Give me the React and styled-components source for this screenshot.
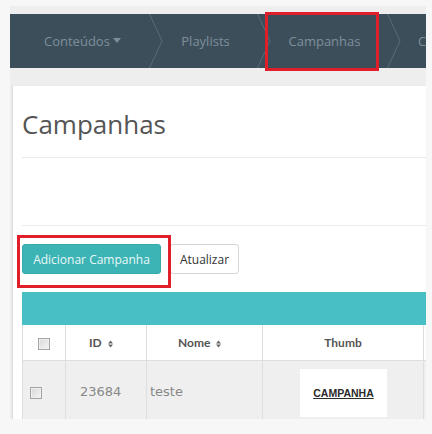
import React from "react";
import styled, { createGlobalStyle } from "styled-components";

const Global = createGlobalStyle`
  html, body { margin: 0; padding: 0; background: #f7f7f7; }
  body { font-family: "Open Sans", "Noto Sans", sans-serif; }
`;

const Wrapper = styled.div`
  margin: 6px 0 0 10px;
  width: 416px;
  height: 413px;
  background: #eeeeee;
  padding-top: 8px;
  box-sizing: border-box;
  overflow: hidden;
`;

const Nav = styled.nav`
  display: flex;
  height: 54px;
  background: #3d4e5b;
  width: 440px;
`;

const NavItem = styled.div`
  position: relative;
  display: flex;
  align-items: center;
  justify-content: ${(p) => p.$justify || "center"};
  flex: 0 0 ${(p) => p.$w}px;
  box-sizing: border-box;
  padding: ${(p) => p.$pad || "0"};
  color: #7d8e9b;
  font-size: 13px;
  white-space: nowrap;
`;

const Caret = styled.span`
  display: inline-block;
  width: 0;
  height: 0;
  margin-left: 3px;
  border-left: 4px solid transparent;
  border-right: 4px solid transparent;
  border-top: 5px solid #7d8e9b;
  vertical-align: middle;
  position: relative;
  top: -1px;
`;

const Highlight = styled.div`
  position: absolute;
  left: -6px;
  top: -2px;
  width: 114px;
  height: 59px;
  border: 3px solid #e01f2a;
  box-sizing: border-box;
  pointer-events: none;
`;

const Chevron = () => (
  <svg width="14" height="54" viewBox="0 0 14 54" style={{ flex: "0 0 14px" }}>
    <polyline points="0.5,0 13,27 0.5,54" fill="none" stroke="#5a6b77" strokeWidth="1" />
  </svg>
);

const Card = styled.section`
  margin: 18px 0 0 3px;
  background: #fff;
  box-shadow: -1px 0 1px #dcdcdc;
  padding: 0 0 0 9px;
  min-height: 340px;
`;

const Title = styled.h1`
  margin: 0;
  padding: 20px 0 0 0;
  font-size: 26px;
  line-height: 36px;
  font-weight: 400;
  color: #555;
  height: 51px;
  box-sizing: content-box;
  border-bottom: 1px solid #ebebeb;
`;

const Spacer = styled.div`
  height: 67px;
  border-bottom: 1px solid #ebebeb;
`;

const Toolbar = styled.div`
  display: flex;
  gap: 9px;
  padding-top: 18px;
  position: relative;
`;

const Button = styled.button`
  height: 30px;
  padding: 0;
  font-family: "Open Sans", sans-serif;
  font-size: 12px;
  border-radius: 3px;
  border: 1px solid ${(p) => (p.$primary ? "#37aaab" : "#d6d6d6")};
  background: ${(p) => (p.$primary ? "#3cb3b4" : "#fff")};
  color: ${(p) => (p.$primary ? "#eaf8f8" : "#333")};
  width: ${(p) => p.$w}px;
`;

const BtnHighlight = styled.div`
  position: absolute;
  left: -5px;
  top: 9px;
  width: 154px;
  height: 53px;
  border: 3px solid #e01f2a;
  box-sizing: border-box;
  pointer-events: none;
`;

const TealBar = styled.div`
  margin-top: 18px;
  height: 33px;
  background: #48bfc4;
  width: 440px;
`;

const Table = styled.table`
  border-collapse: collapse;
  table-layout: fixed;
  width: 480px;
`;

const Th = styled.th`
  height: 35px;
  padding: 0;
  border: 1px solid #dedede;
  border-top: none;
  background: #fff;
  font-family: "Lato", sans-serif;
  font-weight: 700;
  font-size: 12px;
  color: #555;
  text-align: ${(p) => p.$align || "center"};
  padding-left: ${(p) => p.$pl || 0}px;
  box-sizing: border-box;
`;

const Td = styled.td`
  height: 62px;
  padding: 0;
  border: 1px solid #dedede;
  background: #efefef;
  font-family: "DejaVu Sans", sans-serif;
  font-size: 13px;
  color: #888;
  text-align: ${(p) => p.$align || "center"};
  padding-left: ${(p) => p.$pl || 0}px;
  vertical-align: ${(p) => p.$va || "middle"};
`;

const Check = styled.span`
  display: inline-block;
  width: 10px;
  height: 10px;
  border: 1px solid #a5a5a5;
  background: linear-gradient(135deg, #d8d8d8, #f4f4f4);
  box-shadow: inset 0 0 0 1px #eee;
  vertical-align: middle;
`;

const Sort = () => (
  <svg width="5" height="8" viewBox="0 0 5 8" style={{ marginLeft: 6, verticalAlign: "middle" }}>
    <polygon points="2.5,0.5 5,3.5 0,3.5" fill="#666" />
    <polygon points="0,4.5 5,4.5 2.5,7.5" fill="#666" />
  </svg>
);

const Thumb = styled.div`
  margin: 8px 0 0 37px;
  width: 87px;
  height: 48px;
  background: #fff;
  display: flex;
  align-items: center;
  justify-content: center;
  font-family: "Liberation Sans", Arial, sans-serif;
  font-weight: 700;
  font-size: 10.5px;
  color: #2a2a2a;
  text-decoration: underline;
`;

export default function App() {
  return (
    <>
      <Global />
      <Wrapper>
        <Nav>
          <NavItem $w={139} $justify="flex-start" $pad="0 0 0 34px">
            Conteúdos<Caret />
          </NavItem>
          <Chevron />
          <NavItem $w={94} $pad="0 9px 0 0">Playlists</NavItem>
          <Chevron />
          <NavItem $w={116} $pad="0 9px 0 0">
            Campanhas
            <Highlight />
          </NavItem>
          <Chevron />
          <NavItem $w={80} $justify="flex-start" $pad="0 0 0 17px">Canais</NavItem>
        </Nav>
        <Card>
          <Title>Campanhas</Title>
          <Spacer />
          <Toolbar>
            <Button $primary $w={139}>Adicionar Campanha</Button>
            <Button $w={69}>Atualizar</Button>
            <BtnHighlight />
          </Toolbar>
          <TealBar />
          <Table>
            <colgroup>
              <col style={{ width: 43 }} />
              <col style={{ width: 81 }} />
              <col style={{ width: 116 }} />
              <col style={{ width: 161 }} />
              <col style={{ width: 79 }} />
            </colgroup>
            <thead>
              <tr>
                <Th><Check /></Th>
                <Th $align="left" $pl={23}>ID<Sort /></Th>
                <Th $align="left" $pl={31}>Nome<Sort /></Th>
                <Th>Thumb</Th>
                <Th />
              </tr>
            </thead>
            <tbody>
              <tr>
                <Td $align="left" $pl={7}><Check /></Td>
                <Td $align="left" $pl={14}>23684</Td>
                <Td $align="left" $pl={3}>teste</Td>
                <Td $align="left" $va="top"><Thumb>CAMPANHA</Thumb></Td>
                <Td />
              </tr>
            </tbody>
          </Table>
        </Card>
      </Wrapper>
    </>
  );
}
